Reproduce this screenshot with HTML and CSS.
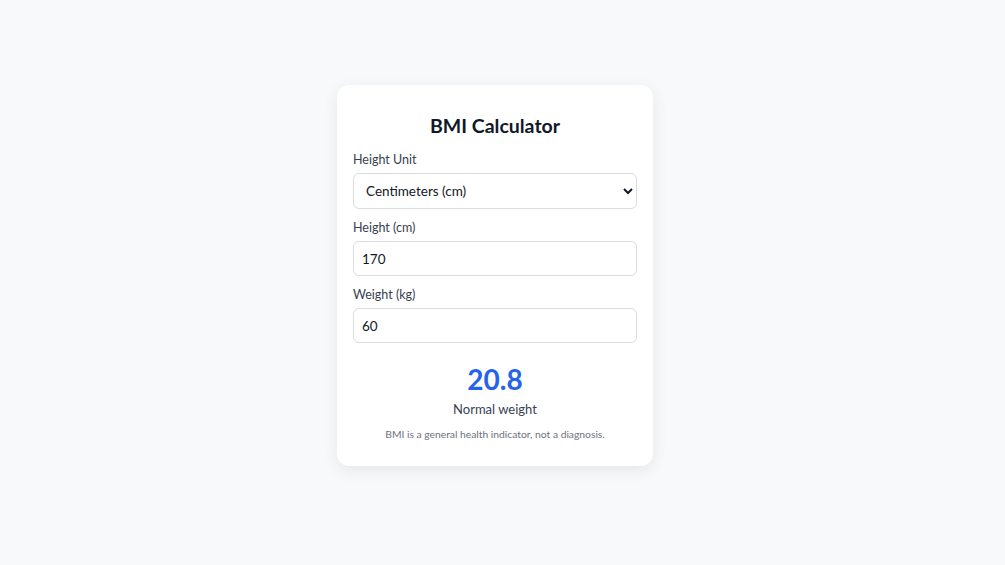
FILE: index.html
```html
<!DOCTYPE html>
<html lang="en">
<head>
<meta charset="utf-8">
<title>BMI Calculator</title>
<link rel="stylesheet" href="styles.css">
</head>
<body>
<main class="page">
  <section class="card">
    <h1 class="title">BMI Calculator</h1>
    <div class="field">
      <label class="label" for="unit">Height Unit</label>
      <select id="unit" class="control select">
        <option>Centimeters (cm)</option>
        <option>Inches (in)</option>
      </select>
    </div>
    <div class="field">
      <label class="label" for="height">Height (cm)</label>
      <input id="height" class="control input" type="text" value="170">
    </div>
    <div class="field">
      <label class="label" for="weight">Weight (kg)</label>
      <input id="weight" class="control input" type="text" value="60">
    </div>
    <div class="result">
      <div class="bmi">20.8</div>
      <div class="category">Normal weight</div>
      <p class="note">BMI is a general health indicator, not a diagnosis.</p>
    </div>
  </section>
</main>
</body>
</html>
```

FILE: styles.css
```css
* { box-sizing: border-box; }
html, body { margin: 0; padding: 0; }
body {
  background: #f8f9fb;
  font-family: Lato, "Noto Sans", sans-serif;
  color: #1f2937;
}
.page {
  display: flex;
  justify-content: center;
  align-items: flex-start;
  padding: 85px 15px 0 0;
  min-height: 565px;
}
.card {
  width: 316px;
  height: 381px;
  background: #ffffff;
  border-radius: 12px;
  box-shadow: 0 4px 16px rgba(0, 0, 0, 0.08);
  padding: 27px 16px 24px;
  display: flex;
  flex-direction: column;
}
.title {
  margin: 0 0 9px;
  text-align: center;
  font-size: 19.5px;
  font-weight: 700;
  color: #111827;
  line-height: 28px;
}
.field {
  display: flex;
  flex-direction: column;
  margin-bottom: 8px;
}
.label {
  font-size: 12.5px;
  line-height: 20px;
  color: #374151;
  padding-top: 1px;
  margin-bottom: 3px;
}
.control {
  width: 100%;
  font-family: inherit;
  font-size: 13.5px;
  color: #111827;
  background: #fff;
  border: 1px solid #d9dce1;
  border-radius: 6px;
  margin: 0;
}
.select {
  height: 36px;
  padding: 0 8px;
}
.input {
  height: 35px;
  padding: 0 8px;
}
.result {
  text-align: center;
  margin-top: 10px;
}
.bmi {
  font-size: 28px;
  font-weight: 700;
  color: #2563eb;
  line-height: 36px;
}
.category {
  font-size: 13px;
  line-height: 20px;
  color: #374151;
  margin-top: 2px;
}
.note {
  margin: 7px 0 0;
  font-size: 10.3px;
  line-height: 16px;
  color: #6b7280;
}
```
